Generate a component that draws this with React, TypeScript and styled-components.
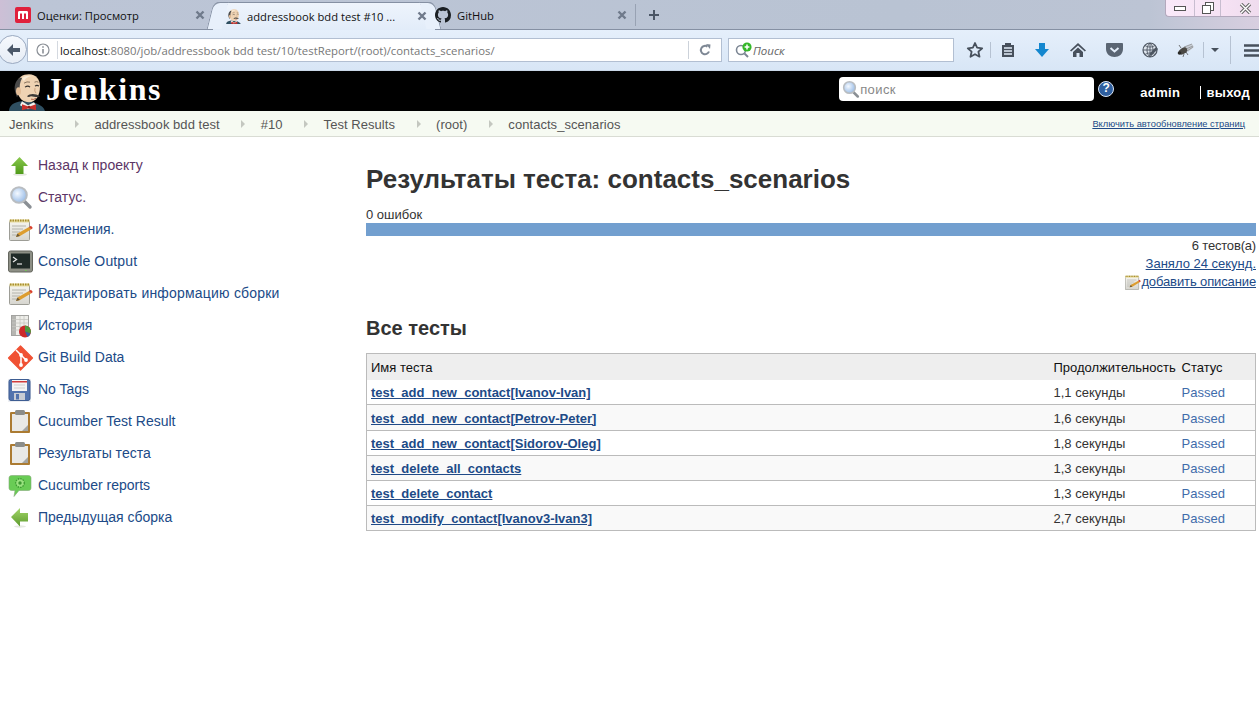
import React from 'react';
import styled, {createGlobalStyle} from 'styled-components';

const GlobalStyle = createGlobalStyle`
    html, body {
        margin: 0;
        padding: 0;
        background: #fff;
    }
    body {
        font-family: "Liberation Sans", Arial, sans-serif;
        font-size: 14px;
        color: #333;
    }
    * {
        box-sizing: border-box;
    }
`;

const Page = styled.div`
    width: 1259px;
    height: 714px;
    overflow: hidden;
    background: #fff;
`;

/* browser chrome */
const TabStrip = styled.div`
    height: 30px;
    display: flex;
    align-items: flex-end;
    position: relative;
    background: linear-gradient(90deg, #cdbfd6 0, #bcc5d6 30px, #b9c3d3 900px, #bcc4d4 1150px, #d8cfe0 1259px);
    border-bottom: 1px solid #8590a3;
    font-family: "Open Sans", "Noto Sans", sans-serif;
    font-size: 11.2px;
`;

const Tab = styled.div<{$width: number; $active?: boolean; $pad: number}>`
    width: ${(p) => p.$width}px;
    height: 28px;
    padding: 0 8px 0 ${(p) => p.$pad}px;
    display: flex;
    align-items: center;
    gap: 6px;
    position: relative;
    color: #111;
    white-space: nowrap;
    flex-shrink: 0;
    ${(p) =>
        p.$active &&
        `
        margin-bottom: -1px;
        background: linear-gradient(#eef4fc, #e2ecf9);
        border-top: 1px solid #8590a3;
        border-radius: 6px 6px 0 0;
        padding-bottom: 1px;
        &::before, &::after {
            content: '';
            position: absolute;
            top: -1px;
            bottom: 1px;
            width: 14px;
            background: #e8f0fb;
            border-top: 1px solid #8590a3;
        }
        &::before {
            left: -3px;
            border-left: 1px solid #8590a3;
            border-radius: 7px 0 0 0;
            transform: skewX(-14deg);
        }
        &::after {
            right: -3px;
            border-right: 1px solid #8590a3;
            border-radius: 0 7px 0 0;
            transform: skewX(14deg);
        }
    `}
`;

const TabInner = styled.span`
    position: relative;
    z-index: 1;
    display: flex;
    align-items: center;
`;

const TabTitle = styled.span`
    position: relative;
    z-index: 1;
    flex: 1;
`;

const TabClose = styled.span`
    position: relative;
    z-index: 1;
    width: 10px;
    height: 10px;
    display: flex;
`;

const TabDivider = styled.div`
    width: 1px;
    height: 22px;
    margin: 0 0 3px 0;
    background: #98a2b3;
`;

const NewTab = styled.div`
    width: 36px;
    height: 28px;
    display: flex;
    align-items: center;
    justify-content: center;
`;

const WindowControls = styled.div`
    position: absolute;
    top: 0;
    right: 0;
    width: 94px;
    height: 17px;
    display: flex;
    background: linear-gradient(90deg, #f9e9f9, #f6e2f4 60%, #efdcee);
    border-left: 1px solid #b3a9bd;
    border-bottom: 1px solid #b3a9bd;
    border-radius: 0 0 0 4px;
`;

const WindowButton = styled.div<{$width: number; $border?: boolean; $shift?: number}>`
    width: ${(p) => p.$width}px;
    padding-left: ${(p) => p.$shift ?? 0}px;
    display: flex;
    align-items: center;
    justify-content: center;
    border-left: ${(p) => (p.$border ? '1px solid #c8bdd0' : 'none')};
`;

const NavBar = styled.div`
    height: 41px;
    display: flex;
    align-items: center;
    background: linear-gradient(#e5effb, #d8e6f6);
    padding-left: 27px;
    position: relative;
    border-bottom: 1px solid #c9d7e8;
`;

const BackButton = styled.div`
    position: absolute;
    left: -2px;
    top: 5px;
    width: 29px;
    height: 29px;
    border-radius: 50%;
    background: linear-gradient(#f6f9fd, #e6ecf5);
    border: 1px solid #9aa9c0;
    display: flex;
    align-items: center;
    justify-content: center;
    z-index: 1;
`;

const Field = styled.div<{$width: number}>`
    width: ${(p) => p.$width}px;
    height: 24px;
    background: #fff;
    border: 1px solid #b2bfd2;
    display: flex;
    align-items: center;
    flex-shrink: 0;
    font-family: "Open Sans", "Noto Sans", sans-serif;
    font-size: 11.35px;
`;

const InfoSlot = styled.span`
    width: 28px;
    margin-left: 1px;
    display: flex;
    justify-content: center;
    flex-shrink: 0;
`;

const UrlText = styled.div`
    flex: 1;
    height: 100%;
    display: flex;
    align-items: center;
    padding-left: 1px;
    color: #777;
    white-space: pre;
    b {
        font-weight: 400;
        color: #111;
    }
`;

const UrlDivider = styled.span`
    width: 1px;
    height: 18px;
    margin-right: 1px;
    background: #d4d9e0;
    flex-shrink: 0;
`;

const ReloadSlot = styled.span`
    width: 33px;
    height: 18px;
    display: flex;
    align-items: center;
    justify-content: center;
    border-left: 1px solid #ccd2da;
`;

const SearchField = styled(Field)`
    margin-left: 6px;
    padding-left: 5px;
    font-style: italic;
    color: #666;
    font-size: 11.5px;
`;

const ToolGroup = styled.div`
    display: flex;
    align-items: center;
    height: 100%;
    margin-left: 6px;
`;

const ToolButton = styled.div<{$width: number}>`
    width: ${(p) => p.$width}px;
    height: 100%;
    display: flex;
    align-items: center;
    justify-content: center;
    flex-shrink: 0;
`;

const BurgerButton = styled(ToolButton)`
    justify-content: flex-end;
    padding-right: 1px;
`;

const ToolDivider = styled.div<{$height: number; $gap?: number}>`
    width: 1px;
    height: ${(p) => p.$height}px;
    margin-left: ${(p) => p.$gap ?? 0}px;
    background: #b6c2d2;
    flex-shrink: 0;
`;

/* jenkins header */
const Header = styled.div`
    height: 40px;
    background: #000;
    display: flex;
    align-items: center;
    position: relative;
    overflow: hidden;
`;

const LogoLink = styled.div`
    display: flex;
    align-items: flex-end;
    height: 40px;
    margin-left: 9px;
`;

const LogoText = styled.span`
    font-family: "Liberation Serif", "Times New Roman", serif;
    font-weight: 700;
    font-size: 32px;
    line-height: 40px;
    letter-spacing: 1.6px;
    color: #fff;
    margin-left: 1px;
    position: relative;
    top: -2px;
`;

const SearchBox = styled.div`
    width: 255px;
    height: 24px;
    margin: 0 0 4px auto;
    background: #fff;
    border-radius: 4px;
    display: flex;
    align-items: center;
    padding-left: 3px;
    color: #888;
    font-size: 13px;
    letter-spacing: 0.4px;
`;

const HelpIcon = styled.div`
    width: 16px;
    height: 16px;
    margin: 0 0 4px 4px;
    border-radius: 50%;
    background: #2f5f9f;
    border: 1.5px solid #dbe6f5;
    color: #fff;
    font-size: 12px;
    line-height: 13px;
    font-weight: 700;
    text-align: center;
`;

const UserName = styled.a`
    margin: 2px 0 0 26px;
    color: #fff;
    font-weight: 700;
    font-size: 13px;
    letter-spacing: 0.4px;
`;

const Logout = styled.a`
    margin: 2px 9px 0 20px;
    padding-left: 5px;
    height: 13px;
    line-height: 13px;
    color: #fff;
    font-weight: 700;
    font-size: 13px;
    letter-spacing: 0.3px;
    border-left: 1px solid #fff;
`;

/* breadcrumbs */
const Breadcrumbs = styled.div`
    height: 26px;
    background: #f6faf2;
    border-bottom: 1px solid #d9dcd4;
    display: flex;
    align-items: center;
    padding: 1px 14px 0 9px;
    color: #555;
    font-size: 13px;
    letter-spacing: 0.05px;
`;

const Crumb = styled.span`
    white-space: nowrap;
`;

const CrumbArrow = styled.span`
    width: 0;
    height: 0;
    margin: 0 15.5px 0 21.5px;
    border-left: 4px solid #c4c7c0;
    border-top: 4px solid transparent;
    border-bottom: 4px solid transparent;
`;

const AutoRefresh = styled.a`
    margin-left: auto;
    color: #204a87;
    font-size: 9.3px;
    letter-spacing: 0;
    text-decoration: underline;
`;

/* page */
const Body = styled.div`
    display: flex;
    align-items: flex-start;
`;

const Side = styled.div`
    width: 366px;
    flex-shrink: 0;
    padding: 12px 0 0 9px;
`;

const SideItem = styled.a<{$visited?: boolean; $spacing?: number}>`
    height: 32px;
    display: flex;
    align-items: center;
    gap: 5px;
    color: ${(p) => (p.$visited ? '#5c3566' : '#204a87')};
    font-size: 14px;
    letter-spacing: ${(p) => p.$spacing ?? 0}px;
    white-space: nowrap;
`;

const SideIcon = styled.span`
    width: 24px;
    height: 24px;
    display: flex;
    flex-shrink: 0;
    svg {
        overflow: visible;
    }
`;

const Main = styled.div`
    width: 890px;
    padding-top: 26px;
`;

const Title = styled.h1`
    margin: 0;
    font-size: 26px;
    line-height: 32px;
    font-weight: 700;
    color: #333;
`;

const FailCount = styled.div`
    margin-top: 13px;
    font-size: 13px;
    line-height: 14px;
    color: #333;
`;

const ProgressBar = styled.div`
    height: 13px;
    margin-top: 1px;
    background: #729fcf;
`;

const RightLine = styled.div<{$spacing?: number}>`
    display: flex;
    justify-content: flex-end;
    align-items: center;
    height: 18.3px;
    font-size: 13px;
    letter-spacing: ${(p) => p.$spacing ?? 0}px;
    color: #333;
    a {
        color: #204a87;
        text-decoration: underline;
    }
`;

const SubTitle = styled.h2`
    margin: 0;
    padding-top: 24.6px;
    font-size: 20px;
    line-height: 26px;
    font-weight: 700;
    color: #333;
`;

const Results = styled.table`
    margin-top: 11.8px;
    width: 890px;
    border-collapse: collapse;
    table-layout: fixed;
    border: 1px solid #bbb;
    font-size: 13px;
`;

const HeadCell = styled.th<{$width?: number}>`
    ${(p) => (p.$width ? `width: ${p.$width}px;` : '')}
    height: 26px;
    padding: 1px 4px 0;
    background: #eee;
    font-weight: 400;
    text-align: left;
    color: #111;
    white-space: nowrap;
`;

const Row = styled.tr<{$odd?: boolean}>`
    background: ${(p) => (p.$odd ? '#f9f9f9' : '#fff')};
    border-bottom: 1px solid #bbb;
    height: 25.2px;
`;

const Cell = styled.td`
    padding: 1px 4px 0;
    color: #333;
    white-space: nowrap;
`;

const TestLink = styled.a`
    color: #204a87;
    font-weight: 700;
    text-decoration: underline;
`;

const StatusText = styled.span`
    color: #3f6cab;
`;

/* drawings */
const Mascot = ({size}: {size: number}) => (
    <svg width={size} height={size * 1.12} viewBox="0 0 36 40" style={{display: 'block'}}>
        <path d="M0 40c0-6 5-9 12-10l12 1c7 2 11 5 12 9z" fill="#2f4f61" />
        <path d="M13 30l6 4 6-3 2 3-8 4-8-4z" fill="#f1f1ec" />
        <path d="M13 33l7 2.500 7-2.500v6l-7-2-7 2z" fill="#c9302c" />
        <circle cx="20" cy="36" r="1.300" fill="#8e1f1c" />
        <path d="M8 14C8 6 14 3 20 3c7 0 11 5 11 12 0 9-4 16-11 16-6 0-10-4-11-9z" fill="#efd3b3" />
        <path d="M13 7c3-2.500 7-3 10-2-3 0-7 2-8 5z" fill="#f9ecd8" />
        <path d="M9 8c-3 3-4 8-3 12l2 6 3-6c-1-5 0-9 2-13-1-1-3 0-4 1z" fill="#4a4a4a" />
        <ellipse cx="9.500" cy="20" rx="2.500" ry="4" fill="#e3bd98" />
        <path d="M18 25c3-3 8-3 13 0-3 2-6 0-9 0-2 1-3 1-4 0z" fill="#3c3a38" />
        <path d="M16 16q3-2 5 0M26 15q2-1.500 4 0" stroke="#33302c" strokeWidth="1.100" fill="none" />
        <path d="M15 12q3-2 6-1M25.500 11q2-1 4 0" stroke="#6d5a48" strokeWidth=".8" fill="none" />
        <path d="M26 17q-1 3 1 5" stroke="#c39a76" strokeWidth=".9" fill="none" />
        <path d="M22 28q3 1 5-1" stroke="#a7583f" strokeWidth=".9" fill="none" />
    </svg>
);

const CloseGlyph = () => (
    <svg width="10" height="10" viewBox="0 0 10 10">
        <path d="M1.500 1.500l7 7M8.500 1.500l-7 7" stroke="#6f7a8b" strokeWidth="2.400" />
    </svg>
);

const MarkFavicon = () => (
    <svg width="16" height="16" viewBox="0 0 16 16">
        <rect width="16" height="16" rx="2" fill="#e0203c" />
        <path d="M3 12V5.500C3 4.500 3.500 4 4.500 4h7c1 0 1.500.5 1.500 1.500V12h-2V6.500H9V12H7V6.500H5V12z" fill="#fff" />
    </svg>
);

const GithubFavicon = () => (
    <svg width="16" height="16" viewBox="0 0 16 16">
        <path
            fill="#1b1f23"
            d="M8 0C3.58 0 0 3.58 0 8c0 3.54 2.29 6.53 5.47 7.59.4.07.55-.17.55-.38 0-.19-.01-.82-.01-1.49-2.01.37-2.53-.49-2.69-.94-.09-.23-.48-.94-.82-1.13-.28-.15-.68-.52-.01-.53.63-.01 1.08.58 1.23.82.72 1.21 1.87.87 2.33.66.07-.52.28-.87.51-1.07-1.78-.2-3.64-.89-3.64-3.95 0-.87.31-1.59.82-2.15-.08-.2-.36-1.02.08-2.12 0 0 .67-.21 2.2.82.64-.18 1.32-.27 2-.27s1.36.09 2 .27c1.53-1.04 2.2-.82 2.2-.82.44 1.1.16 1.92.08 2.12.51.56.82 1.27.82 2.15 0 3.07-1.87 3.75-3.65 3.95.29.25.54.73.54 1.48 0 1.07-.01 1.93-.01 2.2 0 .21.15.46.55.38A8.010 8.010 0 0 0 16 8c0-4.420-3.580-8-8-8z"
        />
    </svg>
);

const PlusGlyph = () => (
    <svg width="12" height="12" viewBox="0 0 12 12">
        <path d="M6 1v10M1 6h10" stroke="#4b5666" strokeWidth="2" />
    </svg>
);

const BackArrow = () => (
    <svg width="16" height="16" viewBox="0 0 16 16">
        <path d="M8 2L2 8l6 6V10h7V6H8z" fill="#4a5768" />
    </svg>
);

const InfoGlyph = () => (
    <svg width="14" height="14" viewBox="0 0 14 14">
        <circle cx="7" cy="7" r="6" fill="none" stroke="#8a8f96" strokeWidth="1.200" />
        <path d="M7 6v4.500M7 3.200v1.600" stroke="#8a8f96" strokeWidth="1.600" />
    </svg>
);

const ReloadGlyph = () => (
    <svg width="12" height="12" viewBox="0 0 12 12">
        <path d="M10 7.500A4.200 4.200 0 1 1 8.500 2.600" fill="none" stroke="#7d8794" strokeWidth="2" />
        <path d="M7 0l4.500.5L11 5z" fill="#7d8794" />
    </svg>
);

const SearchAddGlyph = () => (
    <svg width="19" height="16" viewBox="0 0 19 16">
        <circle cx="7" cy="8" r="4.500" fill="none" stroke="#7d8794" strokeWidth="1.600" />
        <path d="M10.500 11.500l3.500 3.500" stroke="#7d8794" strokeWidth="2" />
        <circle cx="13" cy="5" r="4.600" fill="#35b729" />
        <path d="M13 2.600v4.800M10.600 5h4.800" stroke="#fff" strokeWidth="1.500" />
    </svg>
);

const StarGlyph = () => (
    <svg width="18" height="18" viewBox="0 0 18 18">
        <path d="M9 2l2.100 4.700 5.100.6-3.800 3.400 1.100 5L9 13.200l-4.500 2.500 1.100-5-3.800-3.400 5.100-.6z" fill="none" stroke="#47505c" strokeWidth="1.800" strokeLinejoin="round" />
    </svg>
);

const ClipboardGlyph = () => (
    <svg width="16" height="16" viewBox="0 0 16 16">
        <path d="M2 3h3V1h6v2h3v12H2z" fill="#47505c" />
        <path d="M4 6h8M4 9h8M4 12h8" stroke="#e3edf9" strokeWidth="1.300" />
    </svg>
);

const DownloadGlyph = () => (
    <svg width="16" height="16" viewBox="0 0 16 16">
        <path d="M5 1h6v6h4l-7 8-7-8h4z" fill="#1487cf" />
    </svg>
);

const HomeGlyph = () => (
    <svg width="16" height="16" viewBox="0 0 16 16">
        <path d="M8 1L0 8.500l1.200 1L8 3.500l6.800 6 1.200-1z" fill="#47505c" />
        <path d="M3 10l5-4.500 5 4.500v5H9.500v-4h-3v4H3z" fill="#47505c" />
    </svg>
);

const PocketGlyph = () => (
    <svg width="17" height="16" viewBox="0 0 17 16">
        <path d="M1 1h15c.5 0 1 .5 1 1v5c0 5-4 8-8.500 8S0 12 0 7V2c0-.5.500-1 1-1z" fill="#5a6573" />
        <path d="M4.500 6l4 3.500 4-3.500" fill="none" stroke="#e3edf9" strokeWidth="2" />
    </svg>
);

const GlobeGlyph = () => (
    <svg width="17" height="17" viewBox="0 0 17 17">
        <circle cx="8" cy="8" r="7" fill="#dfe6ee" stroke="#4d5662" strokeWidth="1.200" />
        <path d="M1 8h14M8 1v14M3 3.500c3 2 7 2 10 0M3 12.500c3-2 7-2 10 0M8 1c-4 3-4 11 0 14M8 1c4 3 4 11 0 14" fill="none" stroke="#4d5662" strokeWidth=".9" />
        <path d="M7 14l1-3 6-6 2 2-6 6z" fill="#4d5662" />
    </svg>
);

const FlyGlyph = () => (
    <svg width="18" height="14" viewBox="0 0 18 14">
        <path d="M7 4l8-3 2 3-6 5z" fill="#c8ced6" />
        <path d="M7 4l8-3M9 6l7-3M10 8l6-4" stroke="#777" strokeWidth=".6" />
        <ellipse cx="6" cy="8" rx="4.500" ry="3" fill="#4a4844" transform="rotate(-30 6 8)" />
        <circle cx="2.500" cy="10" r="1.800" fill="#2a2a28" />
        <path d="M4 5L2 2M7 11l-1 3M9 9l2 3" stroke="#555" strokeWidth=".8" />
    </svg>
);

const DropGlyph = () => (
    <svg width="8" height="4" viewBox="0 0 8 4">
        <path d="M0 0h8L4 4z" fill="#47505c" />
    </svg>
);

const BurgerGlyph = () => (
    <svg width="16" height="13" viewBox="0 0 16 13">
        <path d="M0 1.500h16M0 6.500h16M0 11.500h16" stroke="#47505c" strokeWidth="2.400" />
    </svg>
);

const Magnifier = ({size}: {size: number}) => (
    <svg width={size} height={size} viewBox="0 0 24 24">
        <defs>
            <radialGradient id="lens" cx="0.4" cy="0.4" r="0.7">
                <stop offset="0" stopColor="#f4f9ff" />
                <stop offset="1" stopColor="#8db4e4" />
            </radialGradient>
        </defs>
        <path d="M15 16l6 6" stroke="#8a8f94" strokeWidth="3.400" strokeLinecap="round" />
        <circle cx="10" cy="10" r="7.800" fill="url(#lens)" stroke="#b9bdc1" strokeWidth="2" />
    </svg>
);

const UpArrowIcon = () => (
    <svg width="24" height="24" viewBox="0 0 24 24">
        <defs>
            <linearGradient id="upGreen" x1="0" y1="0" x2="0" y2="1">
                <stop offset="0" stopColor="#8ac94e" />
                <stop offset="1" stopColor="#4f9a1a" />
            </linearGradient>
        </defs>
        <ellipse cx="11" cy="21.500" rx="7" ry="1.300" fill="#e3e7de" />
        <path d="M10.500 4L19 13h-4.500v8h-8v-8H2z" fill="url(#upGreen)" />
    </svg>
);

const NotepadIcon = ({size}: {size: number}) => (
    <svg width={size} height={size} viewBox="0 0 24 24">
        <defs>
            <linearGradient id="padBody" x1="0" y1="0" x2="0" y2="1">
                <stop offset="0" stopColor="#f7f6f0" />
                <stop offset="1" stopColor="#d6d5cf" />
            </linearGradient>
        </defs>
        <rect x="0.500" y="3.500" width="20" height="20" rx="1" fill="url(#padBody)" stroke="#9d9d96" />
        <rect x="0.500" y="2.500" width="20" height="3" fill="#e7dca0" />
        <path d="M1 3.500h19" stroke="#a98f2f" strokeWidth="2" strokeDasharray="1.500 1" />
        <path d="M3 9h14M3 12h11M3 15h8M3 18h5" stroke="#b4b4ac" strokeWidth="1" />
        <path d="M7 20l1.500-3.500L20 10l2 2.500-11 6.500z" fill="#dd9d2f" />
        <path d="M7 20l1.500-3.500 2.500 2.500z" fill="#6b5a3a" />
        <path d="M20 10l2-1.300 1.800 2.300-1.800 1.500z" fill="#d8402c" />
    </svg>
);

const ConsoleIcon = () => (
    <svg width="24" height="24" viewBox="0 0 24 24">
        <rect x="-0.500" y="2" width="24" height="21" rx="2" fill="#8d8f85" stroke="#64665e" />
        <rect x="2" y="4.500" width="19" height="15" fill="#1f2a27" />
        <path d="M4 8l3.500 2.500L4 13" fill="none" stroke="#e6e6e6" strokeWidth="1.300" />
        <path d="M8 15h5" stroke="#e6e6e6" strokeWidth="1.200" />
        <rect x="16" y="21" width="1.500" height="1" fill="#6fd04d" />
    </svg>
);

const HistoryIcon = () => (
    <svg width="24" height="24" viewBox="0 0 24 24">
        <rect x="2.500" y="2.500" width="17" height="20" fill="#eeeeea" stroke="#a3a3a0" />
        <rect x="3" y="3" width="4" height="19" fill="#b5b5b1" />
        <path d="M3 6.500h16M3 10h16M3 13.500h16M3 17h16M11 3v19M15 3v19" stroke="#c6c6c1" strokeWidth=".8" />
        <circle cx="16" cy="18.500" r="6" fill="#cc2a2a" />
        <path d="M16 18.500v-6a6 6 0 0 1 5.500 8z" fill="#4c9a3f" />
        <path d="M16 18.500l5.500 2a6 6 0 0 1-3 3.500z" fill="#3465a4" />
    </svg>
);

const GitIcon = () => (
    <svg width="24" height="24" viewBox="0 0 24 24">
        <path d="M11.500 1L23.500 13 11.500 25-.5 13z" fill="#f05133" stroke="#f05133" strokeWidth="1.200" strokeLinejoin="round" />
        <path d="M7 5l10 10M12 10v10" stroke="#fff" strokeWidth="1.500" />
        <circle cx="12" cy="10" r="1.900" fill="#fff" />
        <circle cx="17" cy="15" r="1.900" fill="#fff" />
        <circle cx="12" cy="20" r="1.900" fill="#fff" />
    </svg>
);

const SaveIcon = () => (
    <svg width="24" height="24" viewBox="0 0 24 24">
        <rect x="-1" y="2" width="23" height="23" fill="#eceef2" />
        <rect x="0" y="2.500" width="21" height="21" rx="2" fill="#5273ad" stroke="#3e5d92" />
        <rect x="3" y="3" width="15" height="11" fill="#f4f4f4" />
        <rect x="3" y="4" width="15" height="1.500" fill="#d23c3c" />
        <path d="M5 8h11M5 11h11" stroke="#d0d0d0" />
        <rect x="5" y="16" width="11" height="7" fill="#c8ccd4" />
        <rect x="7" y="17" width="3" height="5.500" fill="#5273ad" />
    </svg>
);

const ClipboardIcon = () => (
    <svg width="24" height="24" viewBox="0 0 24 24">
        <rect x="1" y="3" width="20" height="21" rx="1" fill="#ab7b32" />
        <rect x="3" y="5" width="16" height="17" fill="#e9e9e6" />
        <path d="M13 22l6-6v6z" fill="#a4a5a3" />
        <rect x="6" y="1" width="10" height="5" rx="1.500" fill="#8b8d8a" />
    </svg>
);

const ReportIcon = () => (
    <svg width="24" height="24" viewBox="0 0 24 24">
        <path d="M2.500 2.500h17c1.500 0 2.500 1 2.500 2.500v10c0 1.500-1 2.500-2.500 2.500H10l-5 6 1-6H2.500C1 17.500 0 16.500 0 15V5c0-1.500 1-2.500 2.500-2.500z" fill="#69cc55" stroke="#84a878" strokeWidth=".6" />
        <circle cx="11" cy="10" r="4.300" fill="#9ae280" stroke="#3c9a31" strokeWidth="1.300" strokeDasharray="1.500 1" />
        <circle cx="11" cy="10" r="1.700" fill="#3c9a31" />
    </svg>
);

const LeftArrowIcon = () => (
    <svg width="24" height="24" viewBox="0 0 24 24">
        <defs>
            <linearGradient id="leftGreen" x1="0" y1="0" x2="0" y2="1">
                <stop offset="0" stopColor="#a3d66a" />
                <stop offset="1" stopColor="#5c9a2c" />
            </linearGradient>
        </defs>
        <ellipse cx="11" cy="21.500" rx="6" ry="1.200" fill="#e6e9e2" />
        <path d="M2 12l9-9v5h8v8.500h-8v5z" fill="url(#leftGreen)" />
    </svg>
);

const sideLinks: {icon: React.ReactNode; label: string; visited?: boolean; spacing?: number}[] = [
    {icon: <UpArrowIcon />, label: 'Назад к проекту', visited: true},
    {icon: <Magnifier size={24} />, label: 'Статус.', visited: true},
    {icon: <NotepadIcon size={24} />, label: 'Изменения.'},
    {icon: <ConsoleIcon />, label: 'Console Output', spacing: 0.14},
    {icon: <NotepadIcon size={24} />, label: 'Редактировать информацию сборки', spacing: 0.2},
    {icon: <HistoryIcon />, label: 'История'},
    {icon: <GitIcon />, label: 'Git Build Data'},
    {icon: <SaveIcon />, label: 'No Tags'},
    {icon: <ClipboardIcon />, label: 'Cucumber Test Result'},
    {icon: <ClipboardIcon />, label: 'Результаты теста'},
    {icon: <ReportIcon />, label: 'Cucumber reports'},
    {icon: <LeftArrowIcon />, label: 'Предыдущая сборка'},
];

const crumbs = ['Jenkins', 'addressbook bdd test', '#10', 'Test Results', '(root)', 'contacts_scenarios'];

const tests = [
    {name: 'test_add_new_contact[Ivanov-Ivan]', time: '1,1 секунды'},
    {name: 'test_add_new_contact[Petrov-Peter]', time: '1,6 секунды'},
    {name: 'test_add_new_contact[Sidorov-Oleg]', time: '1,8 секунды'},
    {name: 'test_delete_all_contacts', time: '1,3 секунды'},
    {name: 'test_delete_contact', time: '1,3 секунды'},
    {name: 'test_modify_contact[Ivanov3-Ivan3]', time: '2,7 секунды'},
];

export default function App() {
    return (
        <Page>
            <GlobalStyle />
            <TabStrip>
                <Tab $width={213} $pad={15}>
                    <TabInner><MarkFavicon /></TabInner>
                    <TabTitle>Оценки: Просмотр</TabTitle>
                    <TabClose><CloseGlyph /></TabClose>
                </Tab>
                <Tab $width={222} $active $pad={13}>
                    <TabInner><Mascot size={15} /></TabInner>
                    <TabTitle>addressbook bdd test #10 ...</TabTitle>
                    <TabClose><CloseGlyph /></TabClose>
                </Tab>
                <Tab $width={200} $pad={0}>
                    <TabInner><GithubFavicon /></TabInner>
                    <TabTitle>GitHub</TabTitle>
                    <TabClose><CloseGlyph /></TabClose>
                </Tab>
                <TabDivider />
                <NewTab><PlusGlyph /></NewTab>
                <WindowControls>
                    <WindowButton $width={28}>
                        <svg width="12" height="5" viewBox="0 0 12 5">
                            <rect x=".5" y=".5" width="11" height="4" fill="#fff" stroke="#555" />
                        </svg>
                    </WindowButton>
                    <WindowButton $width={26} $border>
                        <svg width="12" height="12" viewBox="0 0 12 12">
                            <rect x="3.500" y=".5" width="8" height="8" fill="#fff" stroke="#555" />
                            <rect x=".5" y="3.500" width="8" height="8" fill="#fff" stroke="#555" />
                        </svg>
                    </WindowButton>
                    <WindowButton $width={39} $border $shift={10}>
                        <svg width="13" height="11" viewBox="0 0 13 11">
                            <path d="M2 1l9 9M11 1l-9 9" stroke="#666" strokeWidth="3.400" />
                            <path d="M2 1l9 9M11 1l-9 9" stroke="#fff" strokeWidth="1.400" />
                        </svg>
                    </WindowButton>
                </WindowControls>
            </TabStrip>
            <NavBar>
                <BackButton><BackArrow /></BackButton>
                <Field $width={695}>
                    <InfoSlot><InfoGlyph /></InfoSlot>
                    <UrlDivider />
                    <UrlText>
                        <b>localhost</b>:8080/job/addressbook bdd test/10/testReport/(root)/contacts_scenarios/
                    </UrlText>
                    <ReloadSlot><ReloadGlyph /></ReloadSlot>
                </Field>
                <SearchField $width={226}>
                    <SearchAddGlyph />
                    Поиск
                </SearchField>
                <ToolGroup>
                    <ToolButton $width={30}><StarGlyph /></ToolButton>
                    <ToolDivider $height={16} />
                    <ToolButton $width={33}><ClipboardGlyph /></ToolButton>
                    <ToolButton $width={36}><DownloadGlyph /></ToolButton>
                    <ToolButton $width={36}><HomeGlyph /></ToolButton>
                    <ToolButton $width={36}><PocketGlyph /></ToolButton>
                    <ToolButton $width={36}><GlobeGlyph /></ToolButton>
                    <ToolButton $width={35}><FlyGlyph /></ToolButton>
                    <ToolDivider $height={16} />
                    <ToolButton $width={22}><DropGlyph /></ToolButton>
                    <ToolDivider $height={28} $gap={4} />
                    <BurgerButton $width={30}><BurgerGlyph /></BurgerButton>
                </ToolGroup>
            </NavBar>
            <Header>
                <LogoLink>
                    <Mascot size={36} />
                    <LogoText>Jenkins</LogoText>
                </LogoLink>
                <SearchBox>
                    <Magnifier size={18} />
                    поиск
                </SearchBox>
                <HelpIcon>?</HelpIcon>
                <UserName>admin</UserName>
                <Logout>выход</Logout>
            </Header>
            <Breadcrumbs>
                {crumbs.map((crumb, i) => (
                    <React.Fragment key={crumb}>
                        {i > 0 && <CrumbArrow />}
                        <Crumb>{crumb}</Crumb>
                    </React.Fragment>
                ))}
                <AutoRefresh>Включить автообновление страниц</AutoRefresh>
            </Breadcrumbs>
            <Body>
                <Side>
                    {sideLinks.map((link) => (
                        <SideItem key={link.label} $visited={link.visited} $spacing={link.spacing}>
                            <SideIcon>{link.icon}</SideIcon>
                            {link.label}
                        </SideItem>
                    ))}
                </Side>
                <Main>
                    <Title>Результаты теста: contacts_scenarios</Title>
                    <FailCount>0 ошибок</FailCount>
                    <ProgressBar />
                    <RightLine $spacing={-0.18}>6 тестов(а)</RightLine>
                    <RightLine><a>Заняло 24 секунд.</a></RightLine>
                    <RightLine $spacing={-0.12}>
                        <NotepadIcon size={16} />
                        <a>добавить описание</a>
                    </RightLine>
                    <SubTitle>Все тесты</SubTitle>
                    <Results>
                        <thead>
                            <tr>
                                <HeadCell $width={683}>Имя теста</HeadCell>
                                <HeadCell $width={128}>Продолжительность</HeadCell>
                                <HeadCell>Статус</HeadCell>
                            </tr>
                        </thead>
                        <tbody>
                            {tests.map((test, i) => (
                                <Row key={test.name} $odd={i % 2 === 1}>
                                    <Cell><TestLink>{test.name}</TestLink></Cell>
                                    <Cell>{test.time}</Cell>
                                    <Cell><StatusText>Passed</StatusText></Cell>
                                </Row>
                            ))}
                        </tbody>
                    </Results>
                </Main>
            </Body>
        </Page>
    );
}
